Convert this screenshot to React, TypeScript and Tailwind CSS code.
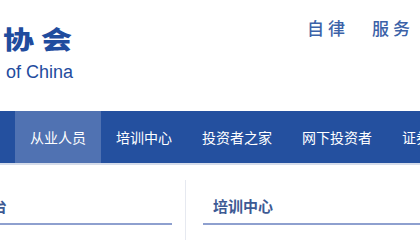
const navItems = ['自律管理', '从业人员', '培训中心', '投资者之家', '网下投资者', '证券研究'];

export default function App() {
  return (
    <div className="relative h-[240px] w-[420px] overflow-hidden bg-white font-['Noto_Sans_CJK_SC',sans-serif]">
      <header className="flex h-[111px] justify-between">
        <div className="pl-[3px] pt-[24px] text-[#1f4c9e]">
          <div className="origin-top scale-y-[0.82] whitespace-nowrap text-[31px] font-black leading-[36px] tracking-[7px]">
            协会
          </div>
          <div className="mt-[2px] pl-[3px] font-['Liberation_Sans',sans-serif] text-[18px] leading-[20px]">
            of China
          </div>
        </div>
        <div className="flex gap-[23px] whitespace-nowrap pr-[6px] pt-[15px] text-[17px] font-medium leading-[26px] tracking-[4px] text-[#3b62a8]">
          <span>自律</span>
          <span>服务</span>
        </div>
      </header>

      <nav className="-ml-[71px] flex h-[54px] border-b-2 border-[#d5dcea] bg-[#24509f]">
        {navItems.map((item) => (
          <a
            key={item}
            href="#"
            className={
              'whitespace-nowrap px-[15px] text-[14px] leading-[52px] text-white ' +
              (item === '从业人员' ? 'bg-[#5072b2] text-[#eef2fa]' : '')
            }
          >
            {item}
          </a>
        ))}
      </nav>

      <div className="flex">
        <section className="-ml-[63px] w-[235px] shrink-0 pt-[31px]">
          <h2 className="border-b-2 border-[#8ea0cf] pb-[7px] pl-[10px] text-[15px] font-bold leading-[20px] text-[#3d5a94]">
            信息平台
          </h2>
        </section>
        <div className="ml-[13px] mt-[15px] h-[60px] w-px shrink-0 bg-[#e6e9f0]" />
        <section className="ml-[17px] flex-1 pt-[31px]">
          <h2 className="border-b-2 border-[#8ea0cf] pb-[7px] pl-[10px] text-[15px] font-bold leading-[20px] text-[#3d5a94]">
            培训中心
          </h2>
        </section>
      </div>
    </div>
  );
}
